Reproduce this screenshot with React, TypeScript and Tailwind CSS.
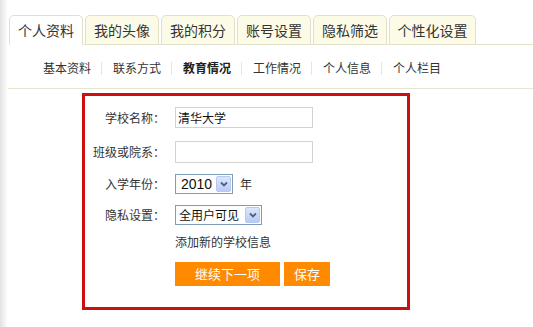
const FONT = '"Noto Sans CJK SC", "Liberation Sans", sans-serif';

const TABS = ['个人资料', '我的头像', '我的积分', '账号设置', '隐私筛选', '个性化设置'];
const SUB = ['基本资料', '联系方式', '教育情况', '工作情况', '个人信息', '个人栏目'];

function FakeSelect({ value, width, mono }: { value: string; width: string; mono?: boolean }) {
  return (
    <div className={`flex h-[20px] items-center border border-[#7f9db9] bg-white ${width}`}>
      <span
        className={`flex-1 leading-[18px] text-[#111] ${mono ? 'pl-[5px] text-[14px]' : 'pl-[3px] text-[12px]'}`}
        style={{ fontFamily: mono ? '"Liberation Sans", Arial, sans-serif' : FONT }}
      >
        {value}
      </span>
      <span className="mr-[1px] flex h-[16px] w-[15px] items-center justify-center rounded-[2px] border border-[#b8c9ef] bg-[linear-gradient(#dce6fc,#b9cbf5)]">
        <svg width="8" height="6" viewBox="0 0 8 6">
          <path d="M1 1.5 L4 4.5 L7 1.5" fill="none" stroke="#4d6185" strokeWidth="1.8" />
        </svg>
      </span>
    </div>
  );
}

function Row({ label, children, className = '' }: { label: string; children: React.ReactNode; className?: string }) {
  return (
    <div className={`flex items-center ${className}`}>
      <div className="w-[80px] text-right text-[12px] leading-[16px] text-[#333]">{label}</div>
      <div className="ml-[10px] flex items-center">{children}</div>
    </div>
  );
}

export default function App() {
  return (
    <div className="flex h-[327px] w-[533px] overflow-hidden bg-white" style={{ fontFamily: FONT }}>
      <div className="w-[8px] shrink-0 bg-[linear-gradient(to_right,#e2e2e2,#ffffff)]" />
      <div className="flex flex-1 flex-col">
        {/* tabs */}
        <div className="mt-[15px] flex h-[30px] items-end">
          <div className="w-[1px] self-stretch" />
          {TABS.map((t, i) => (
            <div key={t} className="flex items-end">
              <div
                className={`flex h-[30px] items-center justify-center rounded-t-[5px] border border-[#e2e0c6] text-[14px] leading-[18px] text-[#333] ${
                  i === 0 ? 'w-[74px] border-b-white bg-white' : 'bg-[#fbfbe8] ' + (i === 5 ? 'w-[87px]' : 'w-[74px]')
                }`}
              >
                {t}
              </div>
              <div className="h-[1px] w-[2px] bg-[#e2e0c6]" />
            </div>
          ))}
          <div className="h-[1px] flex-1 bg-[#e2e0c6]" />
        </div>

        {/* sub nav */}
        <div className="flex h-[43px] items-center pl-[35px] pt-[3px] text-[12px] leading-[16px] text-[#333]">
          {SUB.map((s, i) => (
            <div key={s} className="flex items-center">
              <span className={i === 2 ? 'font-bold text-[#222]' : ''}>{s}</span>
              {i < SUB.length - 1 && <span className="ml-[10px] mr-[11px] h-[13px] w-[1px] bg-[#e4e4e4]" />}
            </div>
          ))}
        </div>
        <div className="h-[1px] bg-[#e8e5d2]" />

        {/* form box */}
        <div className="ml-[74px] mt-[4px] h-[217px] w-[328px] border-[3px] border-[#cc1010] pt-[11px]">
          <Row label="学校名称：">
            <div className="flex h-[21px] w-[138px] items-center border border-[#d2d2d2] px-[2px] text-[12px] leading-[16px] text-[#111]">
              清华大学
            </div>
          </Row>
          <Row label="班级或院系：" className="mt-[13px]">
            <div className="h-[22px] w-[138px] border border-[#d2d2d2]" />
          </Row>
          <Row label="入学年份：" className="mt-[11px]">
            <FakeSelect value="2010" width="w-[58px]" mono />
            <span className="ml-[7px] text-[12px] leading-[16px] text-[#333]">年</span>
          </Row>
          <Row label="隐私设置：" className="mt-[11px]">
            <FakeSelect value="全用户可见" width="w-[87px]" />
          </Row>
          <div className="ml-[90px] mt-[9px] text-[12px] leading-[16px] text-[#333]">添加新的学校信息</div>
          <div className="ml-[90px] mt-[12px] flex gap-[4px]">
            <button className="h-[24px] w-[105px] bg-[#ff8a00] text-[13px] leading-[16px] text-white">继续下一项</button>
            <button className="h-[24px] w-[46px] bg-[#ff8a00] text-[13px] leading-[16px] text-white">保存</button>
          </div>
        </div>
      </div>
    </div>
  );
}
